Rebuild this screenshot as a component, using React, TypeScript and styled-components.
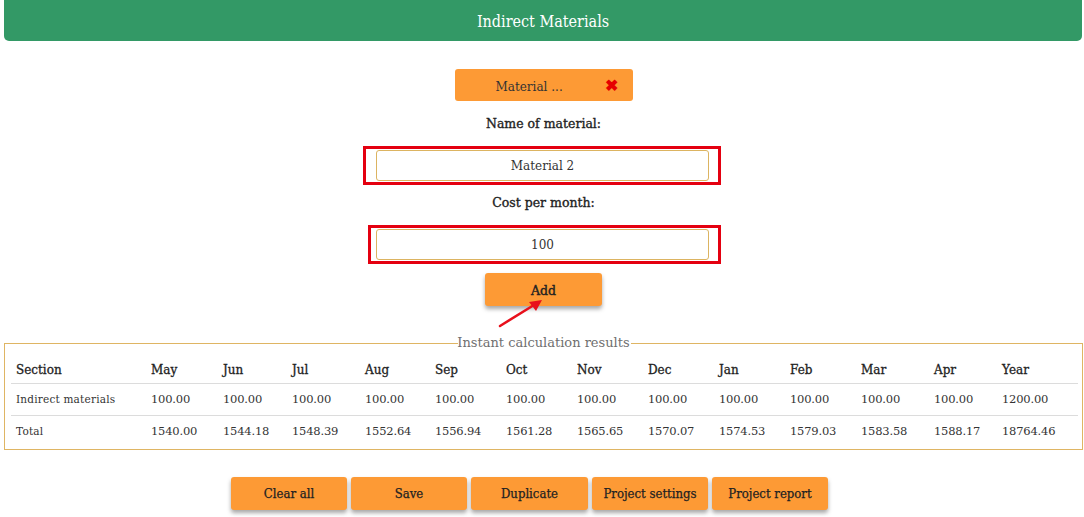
import React from "react";
import styled, { createGlobalStyle } from "styled-components";

const Global = createGlobalStyle`
  html, body { margin: 0; padding: 0; background: #fff; }
  body { font-family: "DejaVu Serif", "Liberation Serif", serif; color: #222; }
  * { box-sizing: border-box; }
`;

const Page = styled.div`
  position: relative;
  width: 1084px;
  height: 517px;
  overflow: hidden;
`;

const Header = styled.header`
  margin: 0 2px 0 4px;
  height: 41px;
  background: #339966;
  border-radius: 0 0 5px 5px;
  display: flex;
  align-items: center;
  justify-content: center;
  color: #fff;
  font-family: "DejaVu Serif Condensed", "DejaVu Serif", serif;
  font-size: 16px;
  padding-top: 1px;
`;

const Form = styled.section`
  display: flex;
  flex-direction: column;
  align-items: center;
  padding-top: 28px;
`;

const Tab = styled.div`
  width: 178px;
  height: 32px;
  margin-left: 3px;
  background: #fd9a35;
  border-radius: 3px;
  display: flex;
  align-items: center;
  padding-left: 41px;
  padding-top: 3px;
  font-size: 12px;
  color: #333;
`;

const TabLabel = styled.span`
  flex: 1;
`;

const Close = styled.span`
  color: #e60000;
  font-size: 16px;
  font-weight: bold;
  width: 28px;
  text-align: left;
  line-height: 1;
  margin-top: -2px;
`;

const Label = styled.div<{ $mt: number }>`
  margin-top: ${(p) => p.$mt}px;
  height: 16px;
  line-height: 16px;
  font-size: 12.5px;
  color: #222;
  -webkit-text-stroke: 0.35px #222;
  margin-left: 3px;
`;

const Highlight = styled.div<{ $pl: number; $ml: number; $mt: number }>`
  margin-top: ${(p) => p.$mt}px;
  margin-left: ${(p) => p.$ml}px;
  border: 3px solid #e40010;
  padding: 1px 9px 1px ${(p) => p.$pl}px;
`;

const Input = styled.div`
  width: 333px;
  height: 31px;
  border: 1px solid #dcb461;
  border-radius: 3px;
  display: flex;
  align-items: center;
  justify-content: center;
  font-size: 12px;
  color: #333;
`;

const ActionButton = styled.button<{ $w: number }>`
  width: ${(p) => p.$w}px;
  height: 33px;
  border: none;
  border-radius: 3px;
  background: #fd9a35;
  box-shadow: 0 3px 4px rgba(0, 0, 0, 0.35);
  font-family: "DejaVu Serif Condensed", "DejaVu Serif", serif;
  font-size: 13px;
  color: #222;
  -webkit-text-stroke: 0.25px #222;
  padding: 0;
  cursor: pointer;
`;

const AddButton = styled(ActionButton)`
  margin-top: 9px;
  margin-left: 3px;
  padding-top: 2px;
  font-family: "DejaVu Serif", serif;
  font-size: 12.5px;
  -webkit-text-stroke: 0.4px #222;
`;

const Arrow = styled.svg`
  position: absolute;
  left: 496px;
  top: 298px;
`;

const Results = styled.fieldset`
  margin: 30px 2px 0 4px;
  padding: 0 4px 2px 6px;
  border: 1px solid #dfb563;
`;

const Legend = styled.legend`
  margin: 0 auto;
  padding: 0;
  font-size: 13px;
  color: #6f6f6f;
  line-height: 14px;
  transform: translateX(-1px);
`;

const Table = styled.table`
  width: 100%;
  border-collapse: collapse;
  table-layout: fixed;
  margin-top: 2px;
`;

const Col = styled.col<{ $w: number }>`
  width: ${(p) => p.$w}px;
`;

const Th = styled.th`
  text-align: left;
  font-weight: normal;
  font-size: 12px;
  color: #222;
  -webkit-text-stroke: 0.3px #222;
  height: 31px;
  padding: 5px 0 0 5px;
  border-bottom: 1px solid #dcdcdc;
`;

const Td = styled.td<{ $small?: boolean }>`
  font-size: ${(p) => (p.$small ? 10.5 : 11.5)}px;
  color: #333;
  height: 32px;
  padding: 0 0 0 5px;
  white-space: nowrap;
  letter-spacing: ${(p) => (p.$small ? 0.2 : -0.2)}px;
`;

const Tr = styled.tr<{ $line?: boolean }>`
  border-bottom: ${(p) => (p.$line ? "1px solid #dcdcdc" : "none")};
`;

const Toolbar = styled.div`
  display: flex;
  justify-content: center;
  gap: 4px;
  margin-top: 27px;
  margin-right: 25px;
`;

const widths = [135, 72, 69, 73, 70, 71, 71, 71, 71, 71, 71, 73, 68, 81];
const heads = ["Section", "May", "Jun", "Jul", "Aug", "Sep", "Oct", "Nov", "Dec", "Jan", "Feb", "Mar", "Apr", "Year"];
const row1 = ["Indirect materials", ...Array(12).fill("100.00"), "1200.00"];
const row2 = [
  "Total", "1540.00", "1544.18", "1548.39", "1552.64", "1556.94", "1561.28", "1565.65",
  "1570.07", "1574.53", "1579.03", "1583.58", "1588.17", "18764.46",
];

export default function App() {
  return (
    <Page>
      <Global />
      <Header>Indirect Materials</Header>
      <Form>
        <Tab>
          <TabLabel>Material ...</TabLabel>
          <Close>✖</Close>
        </Tab>
        <Label $mt={15}>Name of material:</Label>
        <Highlight $mt={14} $pl={10} $ml={0}>
          <Input>Material 2</Input>
        </Highlight>
        <Label $mt={10}>Cost per month:</Label>
        <Highlight $mt={14} $pl={5} $ml={5}>
          <Input>100</Input>
        </Highlight>
        <AddButton $w={117}>Add</AddButton>
      </Form>
      <Arrow width="50" height="32" viewBox="0 0 50 32">
        <line x1="4" y1="28" x2="38" y2="7" stroke="#e8101c" strokeWidth="2.5" strokeLinecap="round" />
        <polygon points="46,2 33,4 40,13" fill="#e8101c" />
      </Arrow>
      <Results>
        <Legend>Instant calculation results</Legend>
        <Table>
          <colgroup>
            {widths.map((w, i) => (
              <Col key={i} $w={w} />
            ))}
          </colgroup>
          <thead>
            <tr>
              {heads.map((h) => (
                <Th key={h}>{h}</Th>
              ))}
            </tr>
          </thead>
          <tbody>
            <Tr $line>
              {row1.map((c, i) => (
                <Td key={i} $small={i === 0}>{c}</Td>
              ))}
            </Tr>
            <Tr>
              {row2.map((c, i) => (
                <Td key={i} $small={i === 0}>{c}</Td>
              ))}
            </Tr>
          </tbody>
        </Table>
      </Results>
      <Toolbar>
        <ActionButton $w={116}>Clear all</ActionButton>
        <ActionButton $w={116}>Save</ActionButton>
        <ActionButton $w={117}>Duplicate</ActionButton>
        <ActionButton $w={116}>Project settings</ActionButton>
        <ActionButton $w={116}>Project report</ActionButton>
      </Toolbar>
    </Page>
  );
}
